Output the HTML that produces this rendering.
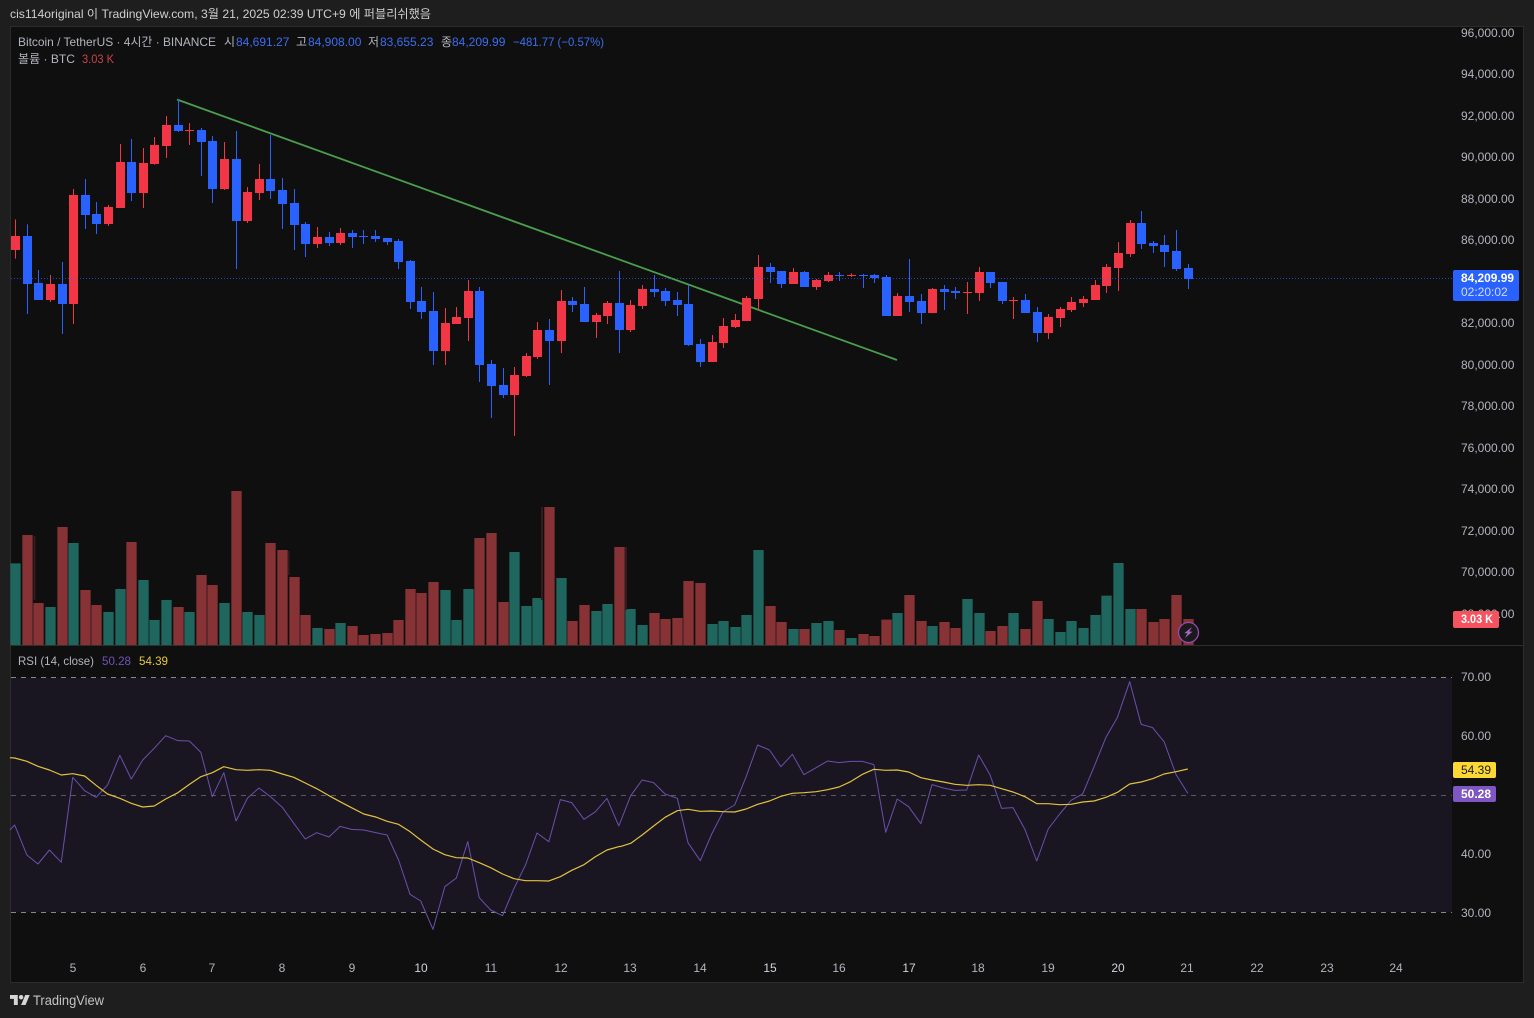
<!DOCTYPE html>
<html><head><meta charset="utf-8"><title>BTC chart</title>
<style>
html,body{margin:0;padding:0;background:#1e1e1e;width:1534px;height:1018px;overflow:hidden}
svg{display:block}
text{font-family:"Liberation Sans","Noto Sans CJK KR",sans-serif;font-size:12px;fill:#b2b5be}
.b{fill:#3d6df0}
</style></head><body>
<svg width="1534" height="1018" viewBox="0 0 1534 1018" xmlns="http://www.w3.org/2000/svg">
<rect width="1534" height="1018" fill="#1e1e1e"/>
<rect x="10.5" y="26.5" width="1513" height="956" fill="#0f0f0f" stroke="#2c2c2c"/>

<!-- RSI band -->
<rect x="11" y="678" width="1441" height="234" fill="#1a1621"/>
<path d="M11 677.5H1452M11 912.5H1452" stroke="#86868e" stroke-dasharray="5 5" fill="none"/>
<path d="M11 795.5H1452" stroke="#5a5764" stroke-dasharray="5 5" fill="none"/>

<!-- separator -->
<path d="M11 645.5H1523" stroke="#2e2e2e"/>

<!-- trendline -->
<path d="M177 99.5L897 360" stroke="#4a9e4c" stroke-width="1.8" fill="none"/>

<!-- volume -->
<g fill="none" stroke-width="31">
<g transform="translate(.17 480) scale(.33333)">
<path stroke="#873336" d="M82 165V495M115 369V495M187 141V495M256 330V495M289 375V495M394 186V495M535 381V495M604 285V495M637 315V495M709 33V495M811 189V495M847 210V495M883 291V495M916 405V495M988 447V495M1057 438V495M1090 465V495M1126 462V495M1162 459V495M1195 420V495"/>
<path stroke="#1f665f" d="M46 250V495M151 381V495M220 189V495M325 396V495M361 327V495M430 300V495M463 420V495M499 360V495M568 396V495M673 369V495M742 396V495M778 405V495M952 444V495M1021 429V495"/>
</g>
<g transform="translate(400.17 480) scale(.33333)">
<path stroke="#873336" d="M31 327V495M64 339V495M100 306V495M238 174V495M274 159V495M310 366V495M448 81V495M517 423V495M553 375V495M658 201V495M763 399V495M796 417V495M832 414V495M865 303V495M901 309V495M1111 378V495M1144 426V495"/>
<path stroke="#1f665f" d="M136 330V495M169 420V495M205 327V495M343 216V495M379 378V495M412 354V495M484 294V495M589 393V495M622 372V495M691 387V495M727 435V495M937 432V495M970 423V495M1006 441V495M1039 405V495M1075 210V495M1180 447V495"/>
</g>
<g transform="translate(800.17 540) scale(.33333)">
<path stroke="#873336" d="M13 267V315M118 270V315M190 282V315M223 288V315M259 239V315M328 165V315M364 243V315M433 246V315M466 264V315M571 273V315M607 258V315M676 267V315M712 183V315M1024 207V315M1060 246V315M1093 237V315M1129 165V315M1165 237V315"/>
<path stroke="#1f665f" d="M49 249V315M85 243V315M154 294V315M292 219V315M397 258V315M502 177V315M538 219V315M640 219V315M745 237V315M781 276V315M814 243V315M850 264V315M886 225V315M919 167V315M955 69V315M991 207V315"/>
</g>
</g>
<path d="M34.5 536V600M542 507V600M626 547V610M288.5 551V575" stroke="#351b1d" stroke-width="2" fill="none"/>

<!-- candles -->
<g fill="none">
<g transform="translate(.17 90) scale(.33333)">
<path stroke="#f23645" stroke-width="3" d="M46 388V506M151 555V636M220 297V702M325 345V408M361 162V354M430 174V354M463 141V224M499 78V204M568 99V165M673 156V300M742 291V399M778 222V330M952 411V474M1021 414V465"/>
<path stroke="#f23645" stroke-width="27" d="M46 438V480M151 582V630M220 315V642M325 351V402M361 216V354M430 219V309M463 165V222M499 105V168M568 120V123M673 207V297M742 306V393M778 267V309M952 441V462M1021 429V459"/>
<path stroke="#2962ff" stroke-width="3" d="M82 403V672M115 540V630M187 516V732M256 267V417M289 336V432M394 147V333M535 28V126M604 114V258M637 138V339M709 123V537M811 135V327M847 264V417M883 297V480M916 396V501M988 426V468M1057 420V474M1090 420V462M1126 420V456M1162 444V465M1195 447V537"/>
<path stroke="#2962ff" stroke-width="27" d="M82 438V582M115 579V630M187 582V642M256 315V375M289 372V402M394 216V309M535 105V123M604 120V156M637 153V297M709 207V393M811 267V303M847 300V342M883 339V405M916 402V462M988 441V459M1057 429V441M1090 438V441M1126 438V447M1162 444V456M1195 453V516"/>
</g>
<g transform="translate(400.17 230) scale(.33333)">
<path stroke="#f23645" stroke-width="3" d="M136 234V405M169 231V282M205 150V333M343 411V618M379 369V441M412 276V387M484 180V369M589 249V324M622 213V282M691 210V306M727 165V237M937 315V396M970 264V354M1006 252V294M1039 198V273M1180 114V162"/>
<path stroke="#f23645" stroke-width="27" d="M136 279V363M169 261V282M205 183V264M343 435V495M379 378V438M412 300V381M484 213V333M589 255V276M622 219V258M691 225V300M727 177V228M937 336V396M970 288V339M1006 270V291M1039 204V273M1180 126V162"/>
<path stroke="#2962ff" stroke-width="3" d="M31 90V237M64 171V267M100 186V405M238 171V456M274 390V564M310 414V504M448 267V465M517 201V246M553 171V276M658 123V369M763 135V201M796 174V228M832 186V258M865 165V348M901 327V411M1111 99V159M1144 123V174"/>
<path stroke="#2962ff" stroke-width="27" d="M31 93V216M64 213V246M100 243V363M238 183V405M274 402V468M310 465V495M448 300V333M517 213V225M553 222V276M658 219V300M763 177V186M796 183V213M832 210V225M865 222V345M901 342V396M1111 111V126M1144 123V162"/>
</g>
<g transform="translate(750.17 200) scale(.33333)">
<path stroke="#f23645" stroke-width="3" d="M25 165V330M199 237V270M235 216V246M304 220V231M442 279V348M547 264V339M652 246V342M688 201V303M790 291V357M895 342V417M931 321V381M964 291V336M1000 288V321M1036 240V300M1069 192V279M1105 126V273M1141 60V171"/>
<path stroke="#f23645" stroke-width="27" d="M25 201V297M199 240V261M235 225V243M304 225V228M442 288V348M547 267V339M652 276V279M688 216V279M790 300V303M895 351V399M931 327V354M964 306V330M1000 297V309M1036 255V300M1069 201V258M1105 159V204M1141 69V162"/>
<path stroke="#2962ff" stroke-width="3" d="M163 213V261M268 216V243M340 222V264M373 222V249M409 225V348M478 177V336M514 282V372M583 255V330M616 261V297M721 216V264M757 246V312M826 282V339M862 321V426M1174 33V147M1210 123V159M1243 105V201M1279 90V213M1315 192V267"/>
<path stroke="#2962ff" stroke-width="27" d="M163 216V261M268 225V228M340 225V228M373 225V234M409 231V348M478 288V306M514 303V339M583 267V276M616 273V279M721 216V249M757 246V303M826 300V339M862 336V399M1174 69V132M1210 129V138M1243 135V156M1279 153V207M1315 204V237"/>
</g>
</g>

<!-- current price line -->
<path d="M11 278.5H1453" stroke="#2962ff" stroke-dasharray="1 2" fill="none" opacity=".7"/>

<!-- RSI lines -->
<g fill="none" stroke-linejoin="round">
<g transform="translate(0 650) scale(.39541 .33333)">
<polyline vector-effect="non-scaling-stroke" stroke="#6a50ad" stroke-width="1" points="25,540 37,525 68,615 96,642 125,600 155,637 184,382 214,422 243,442 272,405 303,316 332,387 361,330 390,295 419,257 450,272 479,273 508,307 537,440 566,368 597,513 626,444 655,414 684,440 714,472 743,520 772,567 801,548 832,561 860,529 889,538 920,540 950,548 979,555 1008,630 1037,733 1064,753 1095,838 1125,710 1154,684 1183,575 1212,743 1241,780 1271,797 1300,715 1329,645 1358,549 1388,575 1417,449 1446,458 1477,508 1506,485 1535,445 1565,528"/>
<polyline vector-effect="non-scaling-stroke" stroke="#e3c23f" stroke-width="1.2" points="25,323 37,324 68,334 96,349 125,360 155,375 184,371 214,378 243,406 272,432 303,445 332,460 361,471 390,468 419,447 450,428 479,403 508,380 537,368 566,350 597,359 626,361 655,359 684,361 714,372 743,382 772,399 801,416 832,437 860,455 889,473 920,492 950,501 979,514 1008,523 1037,545 1064,570 1095,597 1125,614 1154,623 1183,624 1212,638 1241,653 1271,672 1300,686 1329,692 1358,692 1388,693 1417,680 1446,661 1477,644 1506,620 1535,600 1568,589"/>
</g>
<g transform="translate(620 660) scale(.39541 .33333)">
<polyline vector-effect="non-scaling-stroke" stroke="#6a50ad" stroke-width="1" points="-3,498 27,407 56,360 85,368 114,402 145,415 172,548 203,602 232,522 261,455 290,435 319,350 348,255 378,270 407,320 436,283 465,344 496,323 525,303 554,308 583,304 613,304 642,314 672,517 701,417 730,440 761,491 789,374 818,384 847,391 877,390 907,285 936,345 965,445 994,443 1024,508 1054,603 1083,507 1112,462 1141,421 1170,402 1199,320 1229,232 1258,172 1289,65 1318,193 1347,203 1376,245 1406,343 1436,400"/>
<polyline vector-effect="non-scaling-stroke" stroke="#e3c23f" stroke-width="1.2" points="0,560 27,550 56,525 85,498 114,472 145,452 172,448 203,454 232,453 261,455 290,456 319,447 348,433 378,423 407,409 436,400 465,398 496,395 525,389 554,381 583,365 613,343 642,328 672,331 701,330 730,336 761,353 789,360 818,366 847,373 877,376 907,374 936,376 965,386 994,396 1024,410 1054,431 1083,431 1112,434 1141,433 1170,426 1199,423 1229,412 1258,397 1289,372 1318,366 1347,356 1376,342 1406,335 1436,327"/>
</g>
</g>

<!-- lightning icon -->
<circle cx="1188.5" cy="632.5" r="10" fill="#1a1a1a" stroke="#9a48b8" stroke-width="1.3"/>
<path d="M1192 627L1184.3 633.2H1187.6L1184.8 638L1192.6 631.6H1189.2Z" fill="#a866cc"/>

<!-- header text -->
<text x="10" y="18" textLength="421" lengthAdjust="spacingAndGlyphs" style="fill:#cfcfcf">cis114original 이 TradingView.com, 3월 21, 2025 02:39 UTC+9 에 퍼블리쉬했음</text>

<!-- legend -->
<text x="18" y="46" textLength="198" lengthAdjust="spacingAndGlyphs">Bitcoin / TetherUS · 4시간 · BINANCE</text>
<text x="224" y="46">시</text><text x="236" y="46" class="b">84,691.27</text>
<text x="296" y="46">고</text><text x="308" y="46" class="b">84,908.00</text>
<text x="368" y="46">저</text><text x="380" y="46" class="b">83,655.23</text>
<text x="441" y="46">종</text><text x="452" y="46" class="b">84,209.99</text>
<text x="513" y="46" class="b" textLength="91" lengthAdjust="spacingAndGlyphs">−481.77 (−0.57%)</text>
<text x="18" y="63" textLength="57" lengthAdjust="spacingAndGlyphs">볼륨 · BTC</text>
<text x="82" y="63" style="fill:#c8444c" textLength="32" lengthAdjust="spacingAndGlyphs">3.03 K</text>

<!-- RSI legend -->
<text x="18" y="665" textLength="76" lengthAdjust="spacingAndGlyphs">RSI (14, close)</text>
<text x="102" y="665" style="fill:#6f54b5" textLength="29" lengthAdjust="spacingAndGlyphs">50.28</text>
<text x="139" y="665" style="fill:#e8c93f" textLength="29" lengthAdjust="spacingAndGlyphs">54.39</text>

<!-- price axis -->
<g>
<text x="1461" y="37">96,000.00</text>
<text x="1461" y="78">94,000.00</text>
<text x="1461" y="120">92,000.00</text>
<text x="1461" y="161">90,000.00</text>
<text x="1461" y="203">88,000.00</text>
<text x="1461" y="244">86,000.00</text>
<text x="1461" y="327">82,000.00</text>
<text x="1461" y="369">80,000.00</text>
<text x="1461" y="410">78,000.00</text>
<text x="1461" y="452">76,000.00</text>
<text x="1461" y="493">74,000.00</text>
<text x="1461" y="535">72,000.00</text>
<text x="1461" y="576">70,000.00</text>
<text x="1461" y="618">68,000.00</text>
<text x="1461" y="681">70.00</text>
<text x="1461" y="740">60.00</text>
<text x="1461" y="858">40.00</text>
<text x="1461" y="917">30.00</text>
</g>

<!-- price labels -->
<rect x="1453" y="270" width="66" height="31" rx="2" fill="#2962ff"/>
<text x="1461" y="282" style="fill:#fff;font-weight:bold" textLength="53" lengthAdjust="spacingAndGlyphs">84,209.99</text>
<text x="1461" y="296" style="fill:#cfdcff">02:20:02</text>
<rect x="1453" y="611" width="46" height="17" rx="2" fill="#f7525f"/>
<text x="1461" y="623" style="fill:#fff;font-weight:bold" textLength="32" lengthAdjust="spacingAndGlyphs">3.03 K</text>
<rect x="1453" y="762" width="43" height="16" rx="2" fill="#fdd835"/>
<text x="1461" y="774" style="fill:#1a1a1a">54.39</text>
<rect x="1453" y="786" width="43" height="16" rx="2" fill="#7e57c2"/>
<text x="1461" y="798" style="fill:#fff;font-weight:bold" textLength="30" lengthAdjust="spacingAndGlyphs">50.28</text>

<!-- time axis -->
<g text-anchor="middle">
<text x="73" y="972">5</text><text x="143" y="972">6</text><text x="212" y="972">7</text><text x="282" y="972">8</text><text x="352" y="972">9</text>
<text x="421" y="972" style="fill:#d1d4dc">10</text><text x="491" y="972">11</text><text x="561" y="972">12</text><text x="630" y="972">13</text><text x="700" y="972">14</text>
<text x="770" y="972" style="fill:#d1d4dc">15</text><text x="839" y="972">16</text><text x="909" y="972" style="fill:#d1d4dc">17</text><text x="978" y="972">18</text><text x="1048" y="972">19</text>
<text x="1118" y="972" style="fill:#d1d4dc">20</text><text x="1187" y="972">21</text><text x="1257" y="972">22</text><text x="1327" y="972">23</text><text x="1396" y="972">24</text>
</g>

<!-- logo -->
<g transform="translate(10 992.8) scale(.555)" fill="#d6d6d6">
<path d="M14 22H7V11H0V4h14v18zM28 22h-8l7.5-18h8L28 22z"/><circle cx="20" cy="8" r="4"/>
</g>
<text x="33" y="1005" style="font-size:14px;fill:#c4c4c4" textLength="71" lengthAdjust="spacingAndGlyphs">TradingView</text>
</svg>
</body></html>
